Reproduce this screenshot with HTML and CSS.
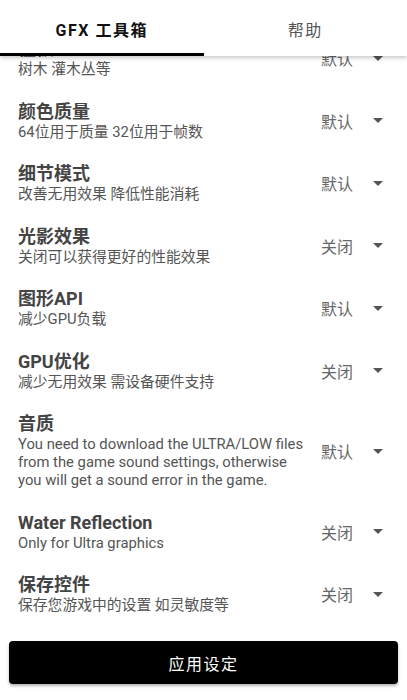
FILE: index.html
```html
<!DOCTYPE html>
<html lang="zh">
<head>
<meta charset="utf-8">
<link rel="stylesheet" href="styles.css">
</head>
<body>
<div class="app">
  <header class="tabs">
    <div class="tab active">GFX 工具箱</div>
    <div class="tab">帮助</div>
  </header>
  <main class="list">
    <div class="row">
      <div class="info"><div class="title">植被</div><div class="sub">树木 灌木丛等</div></div>
      <div class="select">默认<span class="caret"></span></div>
    </div>
    <div class="row">
      <div class="info"><div class="title">颜色质量</div><div class="sub">64位用于质量 32位用于帧数</div></div>
      <div class="select">默认<span class="caret"></span></div>
    </div>
    <div class="row">
      <div class="info"><div class="title">细节模式</div><div class="sub">改善无用效果 降低性能消耗</div></div>
      <div class="select">默认<span class="caret"></span></div>
    </div>
    <div class="row">
      <div class="info"><div class="title">光影效果</div><div class="sub">关闭可以获得更好的性能效果</div></div>
      <div class="select">关闭<span class="caret"></span></div>
    </div>
    <div class="row">
      <div class="info"><div class="title">图形API</div><div class="sub">减少GPU负载</div></div>
      <div class="select">默认<span class="caret"></span></div>
    </div>
    <div class="row">
      <div class="info"><div class="title">GPU优化</div><div class="sub">减少无用效果 需设备硬件支持</div></div>
      <div class="select">关闭<span class="caret"></span></div>
    </div>
    <div class="row">
      <div class="info"><div class="title">音质</div><div class="sub">You need to download the ULTRA/LOW files from the game sound settings, otherwise you will get a sound error in the game.</div></div>
      <div class="select">默认<span class="caret"></span></div>
    </div>
    <div class="row">
      <div class="info"><div class="title">Water Reflection</div><div class="sub">Only for Ultra graphics</div></div>
      <div class="select">关闭<span class="caret"></span></div>
    </div>
    <div class="row">
      <div class="info"><div class="title">保存控件</div><div class="sub">保存您游戏中的设置 如灵敏度等</div></div>
      <div class="select">关闭<span class="caret"></span></div>
    </div>
  </main>
  <footer class="footer">
    <button class="apply">应用设定</button>
  </footer>
</div>
</body>
</html>
```
FILE: styles.css
```css
html, body {
  margin: 0;
  padding: 0;
  background: #fff;
}
body {
  font-family: Roboto, "Noto Sans CJK SC", sans-serif;
}
.app {
  position: relative;
  height: 700px;
  display: flex;
  flex-direction: column;
  overflow: hidden;
}
.tabs {
  position: absolute;
  top: 0;
  left: 0;
  right: 0;
  height: 56px;
  display: flex;
  background: #fff;
  box-shadow: 0 2px 4px rgba(0,0,0,0.22);
  z-index: 2;
}
.tab {
  flex: 1;
  display: flex;
  align-items: center;
  justify-content: center;
  padding-top: 4px;
  box-sizing: border-box;
  font-size: 16px;
  letter-spacing: 1.5px;
  color: #555;
  border-bottom: 3px solid transparent;
}
.tab.active {
  color: #111;
  font-weight: bold;
  border-bottom-color: #000;
}
.list {
  flex: 1;
  overflow: hidden;
  padding-top: 26.5px;
}
.row {
  display: flex;
  align-items: center;
  padding: 11.5px 0 11px 18px;
}
.info {
  width: 290px;
  flex: none;
}
.title {
  font-size: 18px;
  line-height: 22px;
  height: 22px;
  font-weight: bold;
  color: #444;
}
.sub {
  font-size: 14.8px;
  line-height: 18px;
  color: #555;
}
.select {
  margin-left: 13px;
  flex: none;
  display: flex;
  align-items: center;
  font-size: 16px;
  color: #666;
}
.caret {
  margin-left: 20px;
  width: 0;
  height: 0;
  border-left: 5px solid transparent;
  border-right: 5px solid transparent;
  border-top: 5px solid #555;
}
.footer {
  flex: none;
  padding: 0 9px 16px;
}
.apply {
  width: 100%;
  height: 43px;
  border: none;
  border-radius: 4px;
  background: #000;
  color: #fff;
  font-family: Roboto, "Noto Sans CJK SC", sans-serif;
  font-size: 16px;
  letter-spacing: 1.5px;
  box-shadow: 0 2px 3px rgba(0,0,0,0.3);
}
```
